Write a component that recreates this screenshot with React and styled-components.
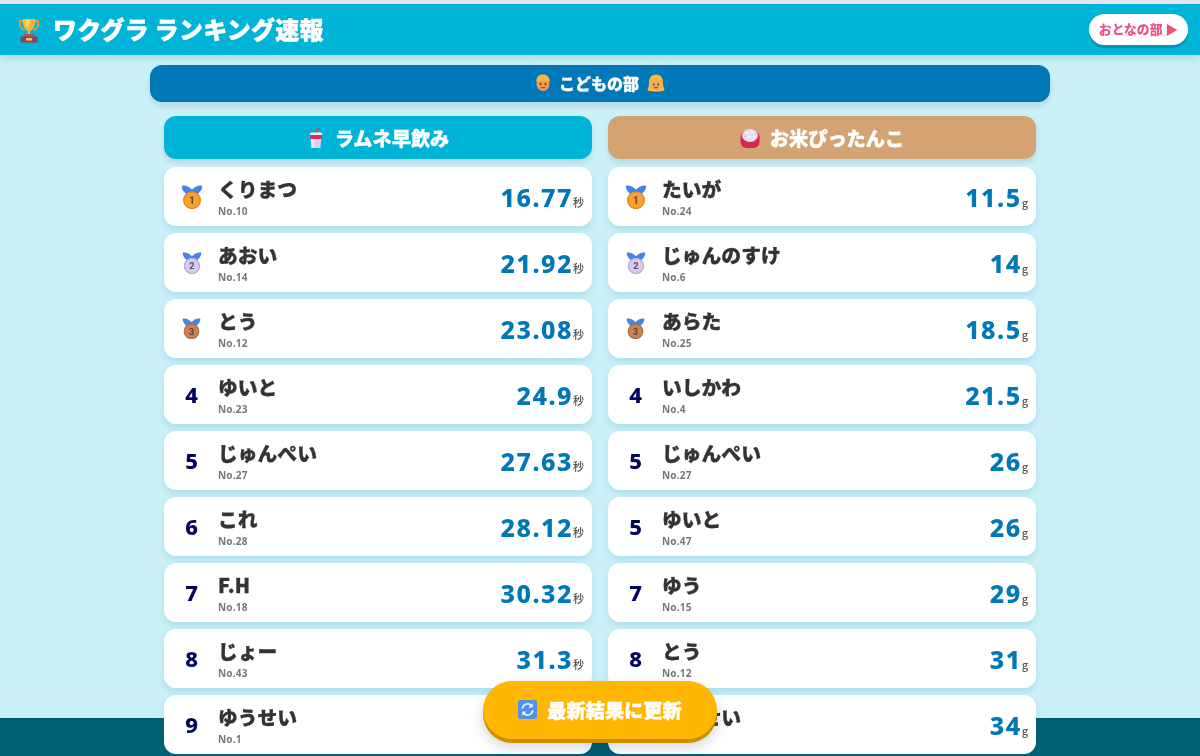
import React from 'react'
import styled, { createGlobalStyle } from 'styled-components'

const kids = [
  { name: 'くりまつ', no: 10, score: '16.77' },
  { name: 'あおい', no: 14, score: '21.92' },
  { name: 'とう', no: 12, score: '23.08' },
  { name: 'ゆいと', no: 23, score: '24.9', rank: 4 },
  { name: 'じゅんぺい', no: 27, score: '27.63', rank: 5 },
  { name: 'これ', no: 28, score: '28.12', rank: 6 },
  { name: 'F.H', no: 18, score: '30.32', rank: 7 },
  { name: 'じょー', no: 43, score: '31.3', rank: 8 },
  { name: 'ゆうせい', no: 1, score: '33.5', rank: 9 },
]

const rice = [
  { name: 'たいが', no: 24, score: '11.5' },
  { name: 'じゅんのすけ', no: 6, score: '14' },
  { name: 'あらた', no: 25, score: '18.5' },
  { name: 'いしかわ', no: 4, score: '21.5', rank: 4 },
  { name: 'じゅんぺい', no: 27, score: '26', rank: 5 },
  { name: 'ゆいと', no: 47, score: '26', rank: 5 },
  { name: 'ゆう', no: 15, score: '29', rank: 7 },
  { name: 'とう', no: 12, score: '31', rank: 8 },
  { name: 'こうせい', no: 1, score: '34', rank: 9 },
]

const medalColors = [
  { fill: '#f6a235', edge: '#e58a24', ink: '#7a4a2a', size: 24 },
  { fill: '#d9cbea', edge: '#bba8d8', ink: '#5c5470', size: 22 },
  { fill: '#c9835a', edge: '#ad6a45', ink: '#6e3f2c', size: 21 },
]

const Medal = ({ place }) => {
  const c = medalColors[place - 1]
  return (
    <MedalSvg width={c.size} height={c.size} viewBox="0 0 24 26">
      <path d="M1 1 C4 0 8 1 12 5 C16 1 20 0 23 1 C23 6 19 10 15 11 L12 9 L9 11 C5 10 1 6 1 1Z" fill="#4285e8" />
      <circle cx="12" cy="16.5" r="9" fill={c.fill} stroke={c.edge} strokeWidth="1.5" />
      <text x="12" y="20.5" fontSize="11" fontWeight="800" textAnchor="middle" fontFamily="Roboto, sans-serif" fill={c.ink}>{place}</text>
    </MedalSvg>
  )
}

const Trophy = () => (
  <svg width="22" height="25" viewBox="0 0 22 25">
    <path d="M5 3 H2 C1 8 3 11 7 12 M17 3 H20 C21 8 19 11 15 12" fill="none" stroke="#e8a02c" strokeWidth="1.8" />
    <path d="M4.5 1 H17.5 C17.5 8 15 12 12 13 V16 H10 V13 C7 12 4.5 8 4.5 1Z" fill="#f4b73b" />
    <path d="M7 2 H12 C12 6 10 9 8.5 9 C7.5 7 7 4.5 7 2Z" fill="#fbd860" />
    <path d="M6 16 H16 L17 19 H5Z" fill="#a8556a" />
    <rect x="2.5" y="18.5" width="17" height="6" rx="0.5" fill="#8a4659" />
    <rect x="8" y="20" width="6" height="2.6" fill="#f3c14b" />
  </svg>
)

const BoyFace = () => (
  <svg width="16" height="18" viewBox="0 0 16 18">
    <ellipse cx="8" cy="10" rx="6.5" ry="7" fill="#f09a50" />
    <path d="M1.5 8 C1 2 5 0.5 8 0.5 C12 0.5 15 3 14.5 8 C12 6 5 6 1.5 8Z" fill="#f7b93c" />
    <circle cx="5.5" cy="10" r="1" fill="#5a3220" />
    <circle cx="10.5" cy="10" r="1" fill="#5a3220" />
    <rect x="5.5" y="13" width="5" height="1.2" rx="0.6" fill="#b8432f" />
  </svg>
)

const GirlFace = () => (
  <svg width="18" height="18" viewBox="0 0 18 18">
    <path d="M9 0.5 C14 0.5 16 4 16 9 C16 13 17.5 15 17.5 16.5 C14 18 4 18 0.5 16.5 C0.5 15 2 13 2 9 C2 4 4 0.5 9 0.5Z" fill="#f7b93c" />
    <ellipse cx="9" cy="10.5" rx="5" ry="5.5" fill="#f4a868" />
    <path d="M4 8 C7 8 11 7 12 4.5 C13 6 14 7 14 8.5 L14 4 H4Z" fill="#f7b93c" />
    <circle cx="6.8" cy="10.5" r="0.9" fill="#5a3220" />
    <circle cx="11.2" cy="10.5" r="0.9" fill="#5a3220" />
    <rect x="7" y="13" width="4" height="1.2" rx="0.6" fill="#c0392b" />
  </svg>
)

const RamuneCup = () => (
  <svg width="18" height="20" viewBox="0 0 18 20">
    <path d="M9 5 L10 1 H13" fill="none" stroke="#d8365c" strokeWidth="1.2" />
    <path d="M3.5 4.5 H14.5 L15.5 7 H2.5Z" fill="#f0edf4" />
    <path d="M3 7 H15 L14.2 11 H3.8Z" fill="#e22a56" />
    <path d="M3.8 11 H14.2 L13.4 20 H4.6Z" fill="#dcd0ec" />
    <path d="M4 11 H7 L7.5 20 H4.6Z" fill="#efe9f6" />
  </svg>
)

const RiceBowl = () => (
  <svg width="20" height="20" viewBox="0 -1 20 20">
    <rect x="0.5" y="2" width="19" height="17" rx="6" fill="#d8264f" />
    <ellipse cx="10" cy="6.5" rx="8" ry="6.5" fill="#e6e0ee" />
    <circle cx="7" cy="4" r="1" fill="#fff" />
    <circle cx="12" cy="3" r="1" fill="#fff" />
    <circle cx="14" cy="7" r="1" fill="#fff" />
    <circle cx="9" cy="8" r="1" fill="#fff" />
    <circle cx="5" cy="7.5" r="1" fill="#c9bfd6" />
  </svg>
)

const RefreshIcon = () => (
  <svg width="19" height="19" viewBox="0 0 20 20">
    <rect width="20" height="20" rx="2.5" fill="#4f92ea" />
    <path d="M4.5 9 A5.5 5.5 0 0 1 14 6" fill="none" stroke="#e8f0fb" strokeWidth="1.8" />
    <path d="M15.5 3.5 V8 H11Z" fill="#e8f0fb" />
    <path d="M15.5 11 A5.5 5.5 0 0 1 6 14" fill="none" stroke="#e8f0fb" strokeWidth="1.8" />
    <path d="M4.5 16.5 V12 H9Z" fill="#e8f0fb" />
  </svg>
)

const Row = ({ item, index, unit }) => (
  <Card>
    <Rank>{index < 3 ? <Medal place={index + 1} /> : item.rank}</Rank>
    <Who>
      <Name>{item.name}</Name>
      <PlayerNo>No.{item.no}</PlayerNo>
    </Who>
    <Score>
      {item.score}
      <Unit>{unit}</Unit>
    </Score>
  </Card>
)

const App = () => {
  return (
    <>
      <Global />
      <Header>
        <Title>
          <Trophy />
          ワクグラ ランキング速報
        </Title>
        <SwitchButton>おとなの部 ▶</SwitchButton>
      </Header>
      <Main>
        <Division>
          <BoyFace />
          こどもの部
          <GirlFace />
        </Division>
        <Columns>
          <Column>
            <EventHead $bg="#00b4d8">
              <RamuneCup />
              ラムネ早飲み
            </EventHead>
            {kids.map((item, i) => (
              <Row key={item.name} item={item} index={i} unit="秒" />
            ))}
          </Column>
          <Column>
            <EventHead $bg="#d4a373">
              <RiceBowl />
              お米ぴったんこ
            </EventHead>
            {rice.map((item, i) => (
              <Row key={item.name + item.no} item={item} index={i} unit="g" />
            ))}
          </Column>
        </Columns>
      </Main>
      <Footer />
      <Refresh>
        <RefreshIcon />
        最新結果に更新
      </Refresh>
    </>
  )
}

const jp = `"Noto Sans CJK JP", "Noto Sans", sans-serif`

const Global = createGlobalStyle`
  html, body {
    margin: 0;
    height: 756px;
    overflow: hidden;
    background: #caf0f8;
    font-family: ${jp};
  }
`
const Header = styled.header`
  position: relative;
  z-index: 2;
  box-sizing: border-box;
  height: 55px;
  border-top: 4px solid #e3e3f1;
  padding: 0 12px 0 18px;
  display: flex;
  align-items: center;
  justify-content: space-between;
  background: #00b4d8;
  box-shadow: 0 4px 8px rgba(0, 0, 0, 0.1);
`
const Title = styled.h1`
  margin: -2px 0 0;
  display: flex;
  align-items: center;
  gap: 13px;
  font-size: 24px;
  line-height: 30px;
  font-weight: 900;
  letter-spacing: 0.25px;
  -webkit-text-stroke: 0.5px #fff;
  color: #fff;
  svg {
    margin-top: 3px;
  }
`
const SwitchButton = styled.button`
  box-sizing: border-box;
  width: 99px;
  height: 31px;
  margin-top: 0;
  padding: 0 0 2px;
  border: 0;
  border-radius: 16px;
  background: #fff;
  box-shadow: 0 3px 0 #0096b7;
  font-family: ${jp};
  font-size: 12.8px;
  font-weight: 900;
  color: #e75480;
`
const Main = styled.main`
  position: relative;
  z-index: 1;
  width: 900px;
  margin: 10px auto 0;
`
const Division = styled.div`
  box-sizing: border-box;
  height: 37px;
  padding-bottom: 1px;
  display: flex;
  align-items: center;
  justify-content: center;
  gap: 8px;
  border-radius: 12px;
  background: #0077b6;
  box-shadow: 0 4px 6px rgba(0, 0, 0, 0.1);
  font-size: 16px;
  font-weight: 900;
  -webkit-text-stroke: 0.3px #fff;
  color: #fff;
`
const Columns = styled.div`
  display: grid;
  grid-template-columns: 428px 428px;
  gap: 16px;
  padding: 14px 14px 0;
`
const Column = styled.section`
  display: flex;
  flex-direction: column;
  gap: 7px;
`
const EventHead = styled.h2`
  margin: 0 0 1px;
  height: 43px;
  display: flex;
  align-items: center;
  justify-content: center;
  gap: 10px;
  border-radius: 12px;
  background: ${(p) => p.$bg};
  box-shadow: 0 4px 6px rgba(0, 0, 0, 0.1);
  font-size: 19.2px;
  font-weight: 900;
  -webkit-text-stroke: 0.4px #fff;
  color: #fff;
`
const Card = styled.div`
  box-sizing: border-box;
  height: 59px;
  display: flex;
  align-items: center;
  padding: 0 8px 2px 10px;
  border-radius: 12px;
  background: #fff;
  box-shadow: 0 4px 6px rgba(0, 119, 182, 0.14);
`
const Rank = styled.div`
  width: 35px;
  margin-right: 9px;
  display: flex;
  align-items: center;
  justify-content: center;
  font-family: "Noto Sans", sans-serif;
  font-size: 22px;
  font-weight: 800;
  color: #03045e;
`
const MedalSvg = styled.svg`
  display: block;
  margin-top: 2px;
`
const Who = styled.div`
  flex: 1;
  min-width: 0;
`
const Name = styled.div`
  font-size: 19.8px;
  line-height: 28px;
  font-weight: 900;
  -webkit-text-stroke: 0.3px #333;
  color: #333;
`
const PlayerNo = styled.div`
  margin-top: 2px;
  font-family: "Noto Sans", sans-serif;
  font-size: 10px;
  line-height: 12px;
  font-weight: 700;
  letter-spacing: 0.2px;
  color: #777;
`
const Score = styled.div`
  margin-top: 2px;
  display: flex;
  align-items: baseline;
  font-family: "Noto Sans", sans-serif;
  font-size: 25px;
  font-weight: 800;
  letter-spacing: 1.5px;
  color: #0077b6;
`
const Unit = styled.span`
  font-family: ${jp};
  font-size: 11px;
  font-weight: 500;
  letter-spacing: 0;
  color: #555;
`
const Footer = styled.footer`
  position: fixed;
  left: 0;
  right: 0;
  bottom: 0;
  height: 38px;
  background: #005f73;
`
const Refresh = styled.button`
  position: fixed;
  z-index: 3;
  left: 483px;
  top: 681px;
  box-sizing: border-box;
  width: 234px;
  height: 58px;
  display: flex;
  align-items: center;
  justify-content: center;
  gap: 10px;
  padding: 0 0 1px;
  border: 0;
  border-radius: 29px;
  background: #ffb703;
  box-shadow: 0 4px 0 #c99000, 0 8px 14px rgba(0, 0, 0, 0.18);
  font-family: ${jp};
  font-size: 19.2px;
  font-weight: 900;
  -webkit-text-stroke: 0.4px #fff;
  color: #fff;
`
export default App
